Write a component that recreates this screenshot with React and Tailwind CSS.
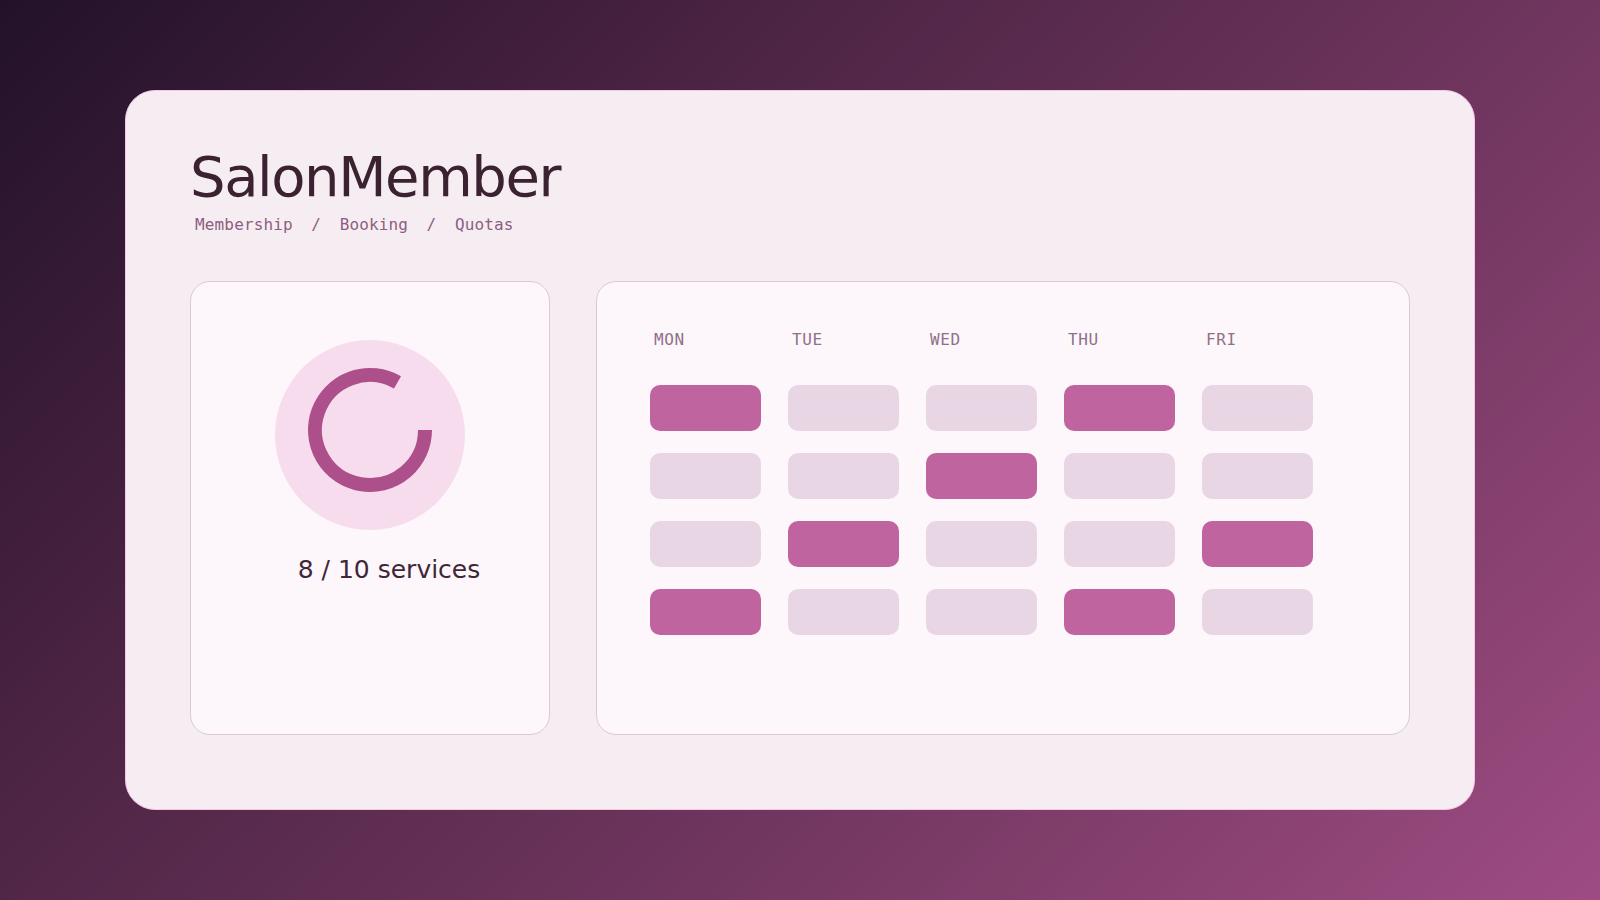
import React from 'react';

const DAYS = ['MON', 'TUE', 'WED', 'THU', 'FRI'];

// booked slots per row, one flag per weekday
const SLOTS = [
  [true, false, false, true, false],
  [false, false, true, false, false],
  [false, true, false, false, true],
  [true, false, false, true, false],
];

const sans = { fontFamily: '"DejaVu Sans", "Noto Sans", sans-serif' };
const mono = { fontFamily: '"DejaVu Sans Mono", "Liberation Mono", monospace' };

const QuotaRing = () => (
  <div className="relative w-[190px] h-[190px] rounded-full bg-[#f7dcee]">
    <svg className="absolute inset-0" width="190" height="190" viewBox="0 0 190 190">
      <path
        d="M150 90 A55 55 0 1 1 122.5 42.37"
        fill="none"
        stroke="#ad4f8b"
        strokeWidth="14"
      />
    </svg>
  </div>
);

const App = () => {
  return (
    <div className="w-full h-[900px] flex items-center justify-center bg-[linear-gradient(135deg,#221229_0%,#4a2342_30%,#6c345c_60%,#9e4c82_100%)]">
      <div className="w-[1350px] h-[720px] rounded-[30px] border border-[#f7c6e6] bg-[#f6edf3] px-[64px] pt-[58px]">
        {/* Header */}
        <h1 className="text-[56px] leading-none tracking-[-0.025em] text-[#3a2231]" style={sans}>
          SalonMember
        </h1>
        <div className="mt-[8px] flex gap-[18.5px] pl-[5px] text-[16px] leading-[24px] tracking-[0.15px] text-[#8c5f7f]" style={mono}>
          <span>Membership</span>
          <span>/</span>
          <span>Booking</span>
          <span>/</span>
          <span>Quotas</span>
        </div>

        <div className="mt-[44px] flex gap-[46px]">
          {/* Quota card */}
          <div className="w-[360px] h-[454px] rounded-[20px] border border-[#dfc6d7] bg-[#fdf7fb] pt-[58px] flex flex-col items-center">
            <QuotaRing />
            <p className="mt-[21px] w-full pl-[38px] text-center text-[25px] leading-[37px] text-[#3f2738]" style={sans}>
              8 / 10 services
            </p>
          </div>

          {/* Weekly booking grid */}
          <div className="flex-1 h-[454px] rounded-[20px] border border-[#dfc6d7] bg-[#fdf7fb] pt-[46px] pl-[53px]">
            <div className="grid grid-cols-[repeat(5,111px)] gap-x-[27px]">
              {DAYS.map((d) => (
                <span key={d} className="pl-[4px] text-[16px] leading-[24px] tracking-[0.04em] text-[#8f7088]" style={mono}>
                  {d}
                </span>
              ))}
            </div>
            <div className="mt-[33px] grid grid-cols-[repeat(5,111px)] gap-x-[27px] gap-y-[22px]">
              {SLOTS.flat().map((on, i) => (
                <div
                  key={i}
                  className={on ? 'h-[46px] rounded-[10px] bg-[#c064a0]' : 'h-[46px] rounded-[10px] bg-[#e9d6e4]'}
                />
              ))}
            </div>
          </div>
        </div>
      </div>
    </div>
  );
};

export default App;
